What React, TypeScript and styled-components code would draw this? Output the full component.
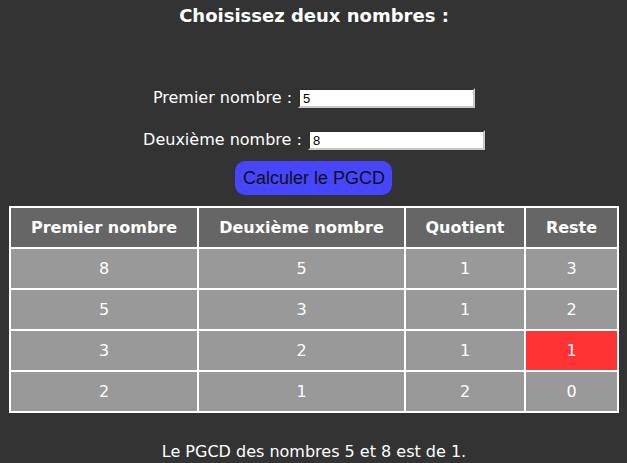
import React from "react";
import styled, { createGlobalStyle } from "styled-components";

const Global = createGlobalStyle`
  html, body { margin: 0; padding: 0; background: #333333; }
  body { font-family: "DejaVu Sans", Verdana, sans-serif; color: #ffffff; }
`;

const Page = styled.div`
  display: flex;
  flex-direction: column;
  align-items: center;
  padding: 0 9px 0 10px;
`;

const Title = styled.h2`
  margin: 5px 0 0;
  font-size: 18px;
  font-weight: bold;
  line-height: 22px;
`;

const Form = styled.form`
  display: flex;
  flex-direction: column;
  align-items: center;
  margin-top: 61px;
`;

const Field = styled.label<{ $last?: boolean }>`
  display: flex;
  align-items: center;
  gap: 6px;
  font-size: 16px;
  line-height: 20px;
  margin-bottom: ${(p) => (p.$last ? "11px" : "22px")};
`;

const Input = styled.input`
  box-sizing: border-box;
  width: 177px;
  height: 20px;
  padding: 1px 3px;
  border: 2px inset #767676;
  border-color: #858585 #c8c8c8 #c8c8c8 #858585;
  background: #fff;
  font-family: "Liberation Sans", Arial, sans-serif;
  font-size: 13px;
  color: #000;
`;

const Button = styled.button`
  box-sizing: border-box;
  width: 157px;
  height: 34px;
  border: none;
  border-radius: 10px;
  background: #4646ff;
  color: #111;
  font-family: "Liberation Sans", Arial, sans-serif;
  font-size: 18px;
  padding: 0;
`;

const Table = styled.table`
  margin-top: 11px;
  width: 608px;
  border-collapse: collapse;
  border: 2px solid #fff;
  table-layout: fixed;
`;

const Th = styled.th`
  background: #666666;
  border: 2px solid #fff;
  height: 39px;
  padding: 0;
  font-size: 16px;
  font-weight: bold;
  text-align: center;
`;

const Td = styled.td<{ $hl?: boolean }>`
  background: ${(p) => (p.$hl ? "#ff3333" : "#999999")};
  border: 2px solid #fff;
  height: 39px;
  padding: 0;
  font-size: 16px;
  text-align: center;
`;

const Result = styled.p`
  margin: 29px 0 0;
  font-size: 16px;
  line-height: 20px;
`;

const rows = [
  [8, 5, 1, 3],
  [5, 3, 1, 2],
  [3, 2, 1, 1],
  [2, 1, 2, 0],
];

export default function App() {
  return (
    <>
      <Global />
      <Page>
        <Title>Choisissez deux nombres :</Title>
        <Form onSubmit={(e) => e.preventDefault()}>
          <Field>
            Premier nombre :
            <Input type="text" defaultValue="5" />
          </Field>
          <Field $last>
            Deuxième nombre :
            <Input type="text" defaultValue="8" />
          </Field>
          <Button type="submit">Calculer le PGCD</Button>
        </Form>
        <Table>
          <colgroup>
            <col style={{ width: 188 }} />
            <col style={{ width: 207 }} />
            <col style={{ width: 120 }} />
            <col style={{ width: 93 }} />
          </colgroup>
          <thead>
            <tr>
              <Th>Premier nombre</Th>
              <Th>Deuxième nombre</Th>
              <Th>Quotient</Th>
              <Th>Reste</Th>
            </tr>
          </thead>
          <tbody>
            {rows.map((r, i) => (
              <tr key={i}>
                {r.map((v, j) => (
                  <Td key={j} $hl={i === 2 && j === 3}>
                    {v}
                  </Td>
                ))}
              </tr>
            ))}
          </tbody>
        </Table>
        <Result>Le PGCD des nombres 5 et 8 est de 1.</Result>
      </Page>
    </>
  );
}
